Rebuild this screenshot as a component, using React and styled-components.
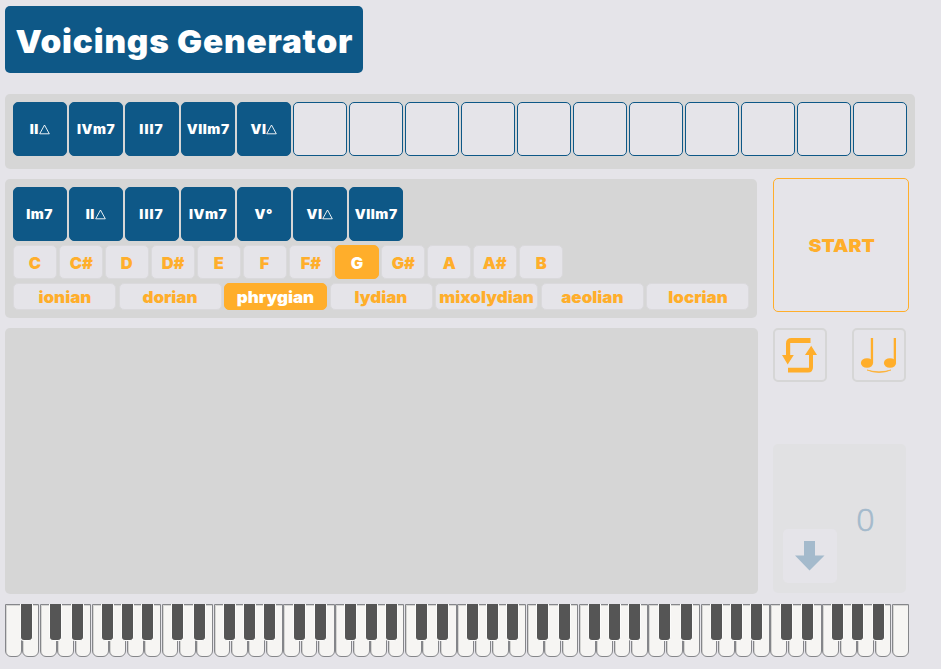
import React from "react";
import styled, { createGlobalStyle } from "styled-components";

const blue = "#0e5887";
const orange = "#ffae2b";
const pale = "#e5e4e9";
const grey = "#d6d6d6";

const GlobalStyle = createGlobalStyle`
  * { box-sizing: border-box; }
  body { margin: 0; background: ${pale}; overflow: hidden; }
`;

const Page = styled.main`
  width: 941px;
  height: 669px;
  padding: 6px 0 0 5px;
  display: flex;
  flex-direction: column;
  align-items: flex-start;
  background: ${pale};
  font-family: "Inter", "Liberation Sans", sans-serif;
  font-weight: 900;
`;

const Heavy = styled.span`
  display: inline-block;
  transform: scaleX(${(p) => p.$stretch || 1.06});
  letter-spacing: ${(p) => p.$spacing || "0"};
  white-space: nowrap;
`;

const Title = styled.h1`
  margin: 0 0 21px;
  width: 358px;
  height: 67px;
  padding: 3px 0 0 1px;
  display: flex;
  align-items: center;
  justify-content: center;
  border-radius: 5px;
  background: ${blue};
  color: #fff;
  font-size: 32px;
  font-weight: 900;
`;

const Progression = styled.section`
  width: 910px;
  height: 75px;
  padding: 8px;
  display: flex;
  gap: 2px;
  border-radius: 5px;
  background: ${grey};
`;

const Chord = styled.div`
  width: 54px;
  height: 54px;
  flex: none;
  display: flex;
  align-items: center;
  justify-content: center;
  border: 1px solid ${blue};
  border-radius: 5px;
  background: ${(p) => (p.$filled ? blue : pale)};
  color: #fff;
  font-size: 13px;
`;

const Triangle = styled.svg`
  width: 11px;
  height: 11px;
  margin-left: 0.8px;
  flex: none;
`;

const Columns = styled.div`
  display: flex;
  gap: 15px;
`;

const Left = styled.div`
  width: 753px;
  padding-top: 10px;
`;

const Picker = styled.section`
  width: 752px;
  height: 139px;
  padding: 8px;
  border-radius: 5px;
  background: ${grey};
`;

const ChordRow = styled.div`
  display: flex;
  gap: 2px;
`;

const NoteRow = styled.div`
  display: flex;
  gap: 2px;
  margin-top: 4px;
`;

const ModeRow = styled.div`
  display: flex;
  gap: 2.5px;
  margin-top: 4px;
`;

const Option = styled.button`
  width: ${(p) => p.$width};
  height: ${(p) => p.$height};
  flex: none;
  display: flex;
  align-items: center;
  justify-content: center;
  padding: 1px 0 0;
  border: 1px solid ${(p) => (p.$active ? orange : "#dad9dc")};
  border-radius: 5px;
  background: ${(p) => (p.$active ? orange : pale)};
  color: ${(p) => (p.$active ? "#fff" : orange)};
  font: inherit;
  font-size: 16px;
`;

const Stage = styled.section`
  width: 753px;
  height: 266px;
  margin-top: 10px;
  border-radius: 5px;
  background: ${grey};
`;

const Side = styled.aside`
  width: 137px;
  padding-top: 9px;
  display: flex;
  flex-direction: column;
`;

const Start = styled.button`
  width: 136px;
  height: 134px;
  margin-left: 0.4px;
  padding: 0;
  border: 1px solid ${orange};
  border-radius: 5px;
  background: transparent;
  color: ${orange};
  font: inherit;
  font-size: 18px;
`;

const Tools = styled.div`
  display: flex;
  gap: 25px;
  margin-top: 16px;
`;

const ToolButton = styled.button`
  width: 54px;
  height: 54px;
  padding: 0;
  border: 2px solid ${grey};
  border-radius: 5px;
  background: transparent;
  svg { display: block; width: 50px; height: 50px; }
`;

const Octave = styled.section`
  width: 133px;
  height: 149px;
  margin-top: 62px;
  padding: 0 0 10px 10px;
  display: flex;
  align-items: flex-end;
  border-radius: 5px;
  background: #e1e1e3;
`;

const DownButton = styled.button`
  width: 54px;
  height: 54px;
  padding: 0;
  border: 0;
  border-radius: 5px;
  background: ${pale};
  svg { display: block; width: 54px; height: 54px; }
`;

const Count = styled.span`
  width: 57px;
  margin-bottom: 41px;
  color: #a4bacc;
  font: 300 32px/46px "Open Sans", sans-serif;
  text-align: center;
  -webkit-text-stroke: 0.7px currentColor;
`;

const Keyboard = styled.div`
  position: relative;
  width: 904px;
  height: 53px;
  margin-top: 10px;
  display: flex;
`;

const WhiteKey = styled.div`
  flex: 1 1 0;
  height: 53px;
  margin-right: 0.6px;
  border: 1px solid #85868a;
  border-radius: 0 0 6px 6px;
  background: #f6f5f3;
  box-shadow: inset 1px 1px 0 #d5d5d3;
`;

const BlackKey = styled.div`
  position: absolute;
  top: 0;
  width: 13px;
  height: 37px;
  border: solid #fbfbfa;
  border-width: 0 1px 1px;
  border-radius: 0 0 4px 4px;
  background: #555;
`;

const progression = ["II△", "IVm7", "III7", "VIIm7", "VI△", "", "", "", "", "", "", "", "", "", "", ""];
const chords = ["Im7", "II△", "III7", "IVm7", "V°", "VI△", "VIIm7"];
const notes = ["C", "C#", "D", "D#", "E", "F", "F#", "G", "G#", "A", "A#", "B"];
const modes = ["ionian", "dorian", "phrygian", "lydian", "mixolydian", "aeolian", "locrian"];

const octaveWidth = 121.7;
const blackKeys = [15.4];
for (let octave = 0; octave < 7; octave++) {
  [10.4, 32, 62, 82.2, 102.3].forEach((x) => blackKeys.push(34.8 + octave * octaveWidth + x));
}

function ChordTile({ name }) {
  const major = name.endsWith("△");
  return (
    <Chord $filled={name !== ""}>
      <Heavy $spacing={name === "III7" ? "1px" : "0.5px"}>{major ? name.slice(0, -1) : name}</Heavy>
      {major && (
        <Triangle viewBox="0 0 11 11" fill="none" stroke="#fff" strokeWidth="0.9">
          <path d="M5.5 1 L10.3 9.8 H0.7 Z" />
        </Triangle>
      )}
    </Chord>
  );
}

export default function App() {
  return (
    <Page>
      <GlobalStyle />
      <Title><Heavy $stretch={1.04} $spacing="0.8px">Voicings Generator</Heavy></Title>
      <Progression>
        {progression.map((name, i) => <ChordTile key={i} name={name} />)}
      </Progression>
      <Columns>
        <Left>
          <Picker>
            <ChordRow>{chords.map((name) => <ChordTile key={name} name={name} />)}</ChordRow>
            <NoteRow>
              {notes.map((note) => (
                <Option key={note} $width="44px" $height="34px" $active={note === "G"}><Heavy $stretch={1.03}>{note}</Heavy></Option>
              ))}
            </NoteRow>
            <ModeRow>
              {modes.map((mode) => (
                <Option key={mode} $width="103px" $height="27px" $active={mode === "phrygian"}><Heavy>{mode}</Heavy></Option>
              ))}
            </ModeRow>
          </Picker>
          <Stage />
        </Left>
        <Side>
          <Start><Heavy $stretch={1.08}>START</Heavy></Start>
          <Tools>
            <ToolButton aria-label="Loop">
              <svg viewBox="0 0 50 50" fill={orange}>
                <path d="M35.5 8H16.5Q11 8 11 13.5V25H7L12.7 34.4L18.8 25H15.2V13H35.5Z" />
                <path d="M13 42.6H33Q38 42.6 38 37V25H42L36.2 15.8L30 25H34V37.8H13Z" />
              </svg>
            </ToolButton>
            <ToolButton aria-label="Tied notes">
              <svg viewBox="0 0 50 50" fill={orange}>
                <ellipse cx="13" cy="33" rx="6.1" ry="4.8" />
                <ellipse cx="36" cy="33" rx="6.1" ry="4.8" />
                <path d="M16.8 8h2.3v25h-2.3zM39.7 8h2.3v25h-2.3z" />
                <path d="M13 40Q25 43.5 37 40Q25 45 13 40Z" stroke={orange} strokeWidth="0.6" />
              </svg>
            </ToolButton>
          </Tools>
          <Octave>
            <DownButton aria-label="Lower octave">
              <svg viewBox="0 0 54 54"><path d="M21 12H32V26.5H41.5L26.5 41.5L12 26.5H21Z" fill="#a4bacc" /></svg>
            </DownButton>
            <Count>0</Count>
          </Octave>
        </Side>
      </Columns>
      <Keyboard>
        {Array.from({ length: 52 }, (_, i) => <WhiteKey key={i} />)}
        {blackKeys.map((x) => <BlackKey key={x} style={{ left: x - 0.8 }} />)}
      </Keyboard>
    </Page>
  );
}
